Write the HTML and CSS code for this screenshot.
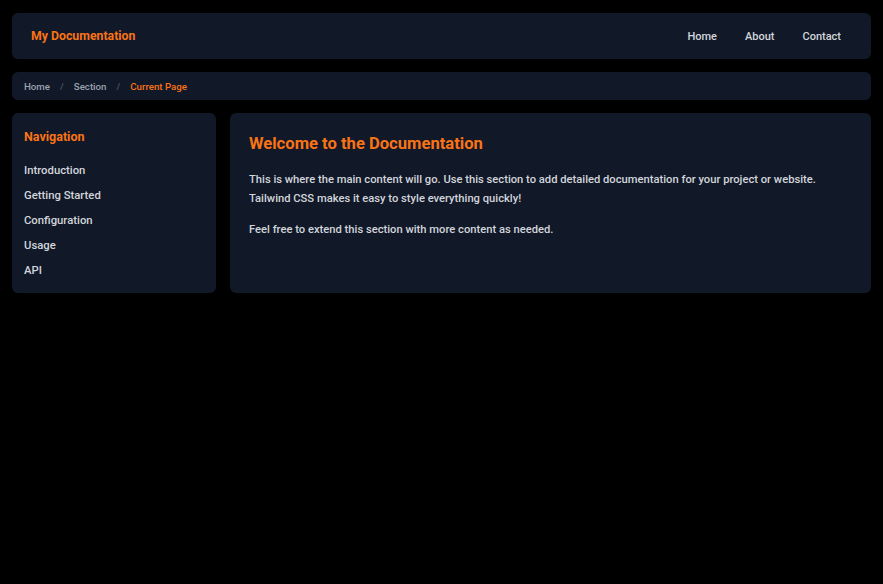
FILE: index.html
```html
<!DOCTYPE html>
<html>
<head>
<meta charset="utf-8">
<link rel="stylesheet" href="styles.css">
</head>
<body>
<div class="page">
  <header class="topbar">
    <div class="brand">My Documentation</div>
    <nav class="topnav">
      <a href="#">Home</a>
      <a href="#">About</a>
      <a href="#">Contact</a>
    </nav>
  </header>
  <div class="crumbs">
    <a href="#">Home</a>
    <span class="sep">/</span>
    <a href="#">Section</a>
    <span class="sep">/</span>
    <span class="current">Current Page</span>
  </div>
  <div class="layout">
    <aside class="sidebar">
      <h2 class="side-title">Navigation</h2>
      <ul class="side-list">
        <li><a href="#">Introduction</a></li>
        <li><a href="#">Getting Started</a></li>
        <li><a href="#">Configuration</a></li>
        <li><a href="#">Usage</a></li>
        <li><a href="#">API</a></li>
      </ul>
    </aside>
    <main class="content">
      <h1 class="title">Welcome to the Documentation</h1>
      <p>This is where the main content will go. Use this section to add detailed documentation for your project or website. Tailwind CSS makes it easy to style everything quickly!</p>
      <p>Feel free to extend this section with more content as needed.</p>
    </main>
  </div>
</div>
</body>
</html>
```
FILE: styles.css
```css
* { box-sizing: border-box; }
html, body { margin: 0; padding: 0; background: #000; }
body {
  font-family: Roboto, "Liberation Sans", Arial, sans-serif;
  color: #d1d5db;
  font-size: 11px;
}
a { color: inherit; text-decoration: none; }
.page {
  padding: 13px 12px;
  display: flex;
  flex-direction: column;
  gap: 13px;
}
.topbar {
  background: #111827;
  border-radius: 6px;
  height: 46px;
  display: flex;
  align-items: center;
  justify-content: space-between;
  padding: 0 30px 0 19px;
}
.brand {
  color: #f97316;
  font-weight: 700;
  font-size: 12.3px;
}
.topnav { display: flex; gap: 28px; font-weight: 500; font-size: 11px; }
.crumbs {
  background: #111827;
  border-radius: 6px;
  height: 28px;
  display: flex;
  align-items: center;
  padding: 0 12px;
  gap: 10px;
  font-size: 9.7px;
  font-weight: 500;
  color: #9ca3af;
}
.crumbs a { color: #9ca3af; }
.crumbs .sep { color: #4b5563; }
.crumbs .current { color: #f97316; }
.layout {
  display: flex;
  gap: 14px;
  align-items: stretch;
}
.sidebar {
  width: 204px;
  flex: none;
  background: #111827;
  border-radius: 6px;
  padding: 16px 12px 10px;
}
.side-title {
  margin: 0 0 14px;
  color: #f97316;
  font-size: 12.5px;
  font-weight: 700;
}
.side-list { list-style: none; margin: 0; padding: 0; }
.side-list li { height: 25px; line-height: 25px; font-weight: 500; font-size: 11.3px; }
.content {
  flex: 1;
  background: #111827;
  border-radius: 6px;
  padding: 21px 19px 38px;
  font-weight: 500;
}
.title {
  margin: 0 0 17px;
  color: #f97316;
  font-size: 16.6px;
  font-weight: 700;
}
.content p {
  margin: 0 0 12px;
  line-height: 19px;
  font-size: 11.2px;
}
```
